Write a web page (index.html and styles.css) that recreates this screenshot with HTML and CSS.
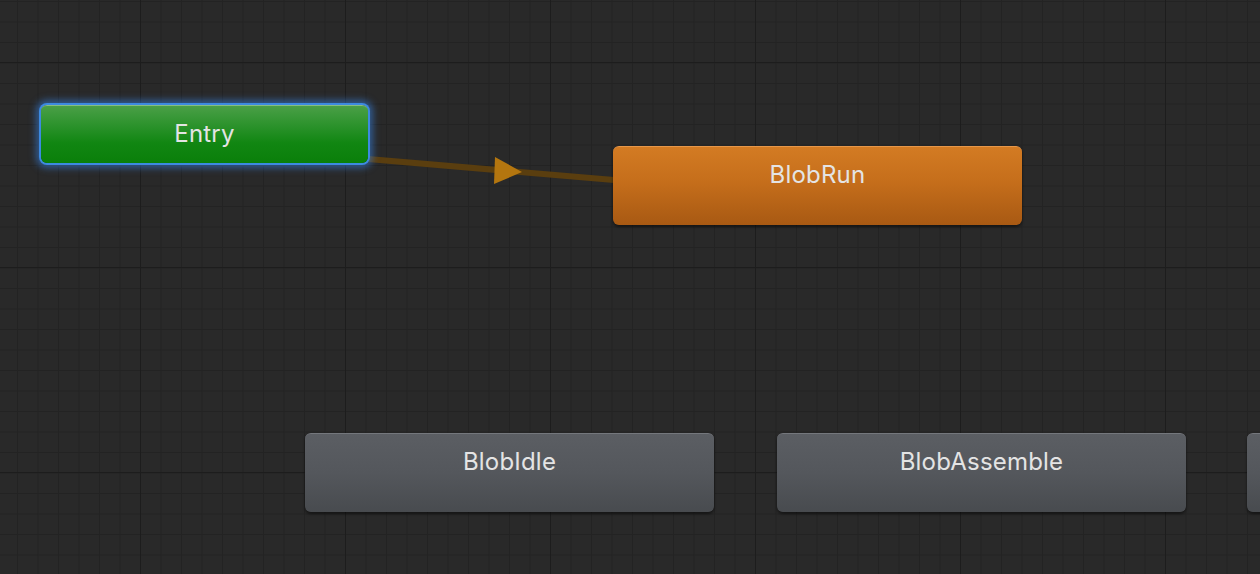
FILE: index.html
```html
<!DOCTYPE html>
<html>
<head>
<meta charset="utf-8">
<link rel="stylesheet" href="styles.css">
</head>
<body>
<div class="graph">
  <svg class="links" width="1260" height="574" viewBox="0 0 1260 574">
    <line x1="368" y1="159" x2="614" y2="180" stroke="#5a3e0f" stroke-width="6"/>
    <polygon points="495,157 522,172 494,184" fill="#b4760f"/>
  </svg>
  <div class="node entry selected" style="left:41px;top:105px;">Entry</div>
  <div class="node state orange" style="left:613px;top:146px;">BlobRun</div>
  <div class="node state gray" style="left:305px;top:433px;">BlobIdle</div>
  <div class="node state gray" style="left:777px;top:433px;">BlobAssemble</div>
  <div class="node state gray" style="left:1247px;top:433px;"></div>
</div>
</body>
</html>
```
FILE: styles.css
```css
html, body {
  margin: 0;
  padding: 0;
  width: 1260px;
  height: 574px;
  overflow: hidden;
  background: #282828;
}
.graph {
  position: relative;
  width: 1260px;
  height: 574px;
  overflow: hidden;
  background-color: #292929;
  background-image:
    linear-gradient(to right, #1d1d1d 1px, transparent 1px),
    linear-gradient(to bottom, #1d1d1d 1px, transparent 1px),
    linear-gradient(to right, #232323 1px, transparent 1px),
    linear-gradient(to bottom, #232323 1px, transparent 1px);
  background-size: 205px 205px, 205px 205px, 20.5px 20.5px, 20.5px 20.5px;
  background-position: 140px 0, 0 62px, 17px 0, 0 1px;
  font-family: Inter, "Noto Sans", sans-serif;
}
.links {
  position: absolute;
  left: 0;
  top: 0;
}
.node {
  position: absolute;
  box-sizing: border-box;
  color: #e4e4e4;
  font-size: 24px;
  letter-spacing: 0.2px;
  text-align: center;
  border-radius: 6px;
}
.entry {
  width: 327px;
  height: 58px;
  line-height: 55px;
  background: linear-gradient(to bottom, #4a9f47 0%, #2b922b 35%, #118612 65%, #0a7f0a 100%);
  border-top: 1px solid #86bd82;
}
.selected {
  box-shadow: 0 0 0 2px #3d8ae0, 0 0 7px 5px rgba(55, 125, 215, 0.6);
}
.state {
  width: 409px;
  height: 79px;
  padding-top: 14px;
  line-height: 28px;
  box-shadow: 0 2px 3px rgba(0, 0, 0, 0.5);
}
.orange {
  background: linear-gradient(to bottom, #d37b23 0%, #c56e1b 45%, #a85913 100%);
  border-top: 1px solid #e6974a;
}
.gray {
  background: linear-gradient(to bottom, #5b5e63 0%, #54575c 50%, #484b4f 100%);
  border-top: 1px solid #74777c;
}
```
